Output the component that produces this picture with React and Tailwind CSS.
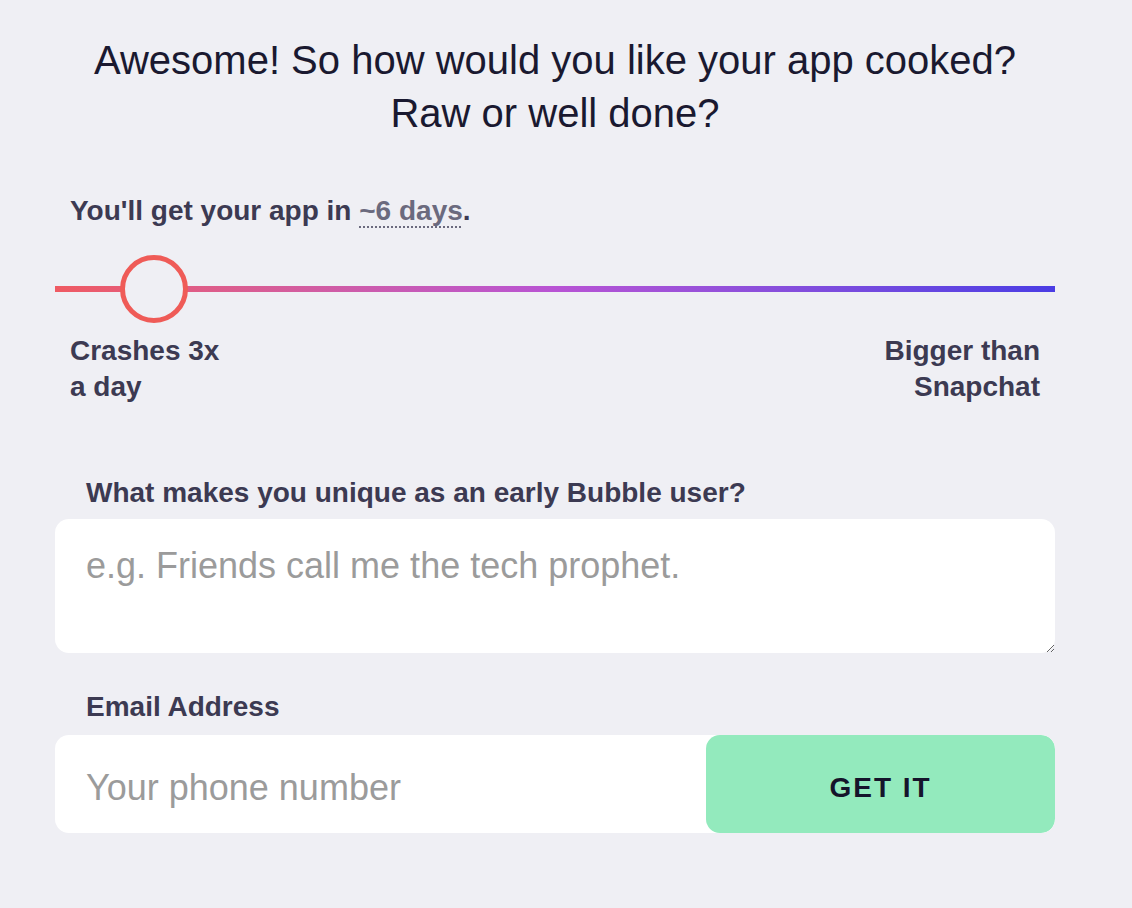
export default function App() {
  return (
    <div
      className="min-h-[908px] w-full bg-[#efeff4] text-[#3c3a52]"
      style={{ fontFamily: '"Liberation Sans", Arial, sans-serif' }}
    >
      <div className="ml-[55px] w-[1000px] pt-[34px]">
        <h1 className="text-center text-[40px] leading-[53px] font-normal text-[#1a1930]">
          Awesome! So how would you like your app cooked?
          <br />
          Raw or well done?
        </h1>

        <div className="mt-[53px] px-[15px]">
          <p className="text-[28px] font-bold leading-[36px]">
            You'll get your app in{" "}
            <span className="text-[#6b6a7e] underline decoration-dotted decoration-[2px] underline-offset-[6px]">
              ~6 days
            </span>
            .
          </p>
        </div>

        <div className="relative mt-[57px] h-[6px] w-full">
          <div className="h-[6px] w-full bg-gradient-to-r from-[#ef5a62] via-[#b853d4] to-[#4a3ce4]" />
          <div className="absolute left-[65px] top-[-31px] h-[68px] w-[68px] rounded-full border-[5px] border-[#ef5b57] bg-[#efeff4]" />
        </div>

        <div className="mt-[41px] flex justify-between px-[15px] text-[28px] font-bold leading-[36px]">
          <div>
            Crashes 3x
            <br />
            a day
          </div>
          <div className="text-right">
            Bigger than
            <br />
            Snapchat
          </div>
        </div>

        <label className="mt-[70px] block px-[31px] text-[28px] font-bold leading-[36px]">
          What makes you unique as an early Bubble user?
        </label>
        <textarea
          className="mt-[8px] block h-[134px] w-full resize-y rounded-[14px] bg-white px-[31px] pt-[25px] text-[36px] leading-[44px] text-[#333] outline-none placeholder:text-[#9b9b9b]"
          placeholder="e.g. Friends call me the tech prophet."
          style={{ fontFamily: '"Liberation Sans", Arial, sans-serif' }}
        />

        <label className="mt-[36px] block px-[31px] text-[28px] font-bold leading-[36px]">
          Email Address
        </label>
        <div className="mt-[10px] flex h-[98px] w-full overflow-hidden rounded-[14px] bg-white">
          <input
            className="min-w-0 flex-1 bg-transparent px-[31px] pt-[8px] text-[36px] text-[#333] outline-none placeholder:text-[#9b9b9b]"
            placeholder="Your phone number"
            style={{ fontFamily: '"Liberation Sans", Arial, sans-serif' }}
          />
          <button
            className="h-full w-[349px] rounded-[14px] bg-[#93eabd] pt-[8px] text-[28px] font-bold tracking-[0.07em] text-[#15142b]"
            style={{ fontFamily: '"Liberation Sans", Arial, sans-serif' }}
          >
            GET IT
          </button>
        </div>
      </div>
    </div>
  );
}
